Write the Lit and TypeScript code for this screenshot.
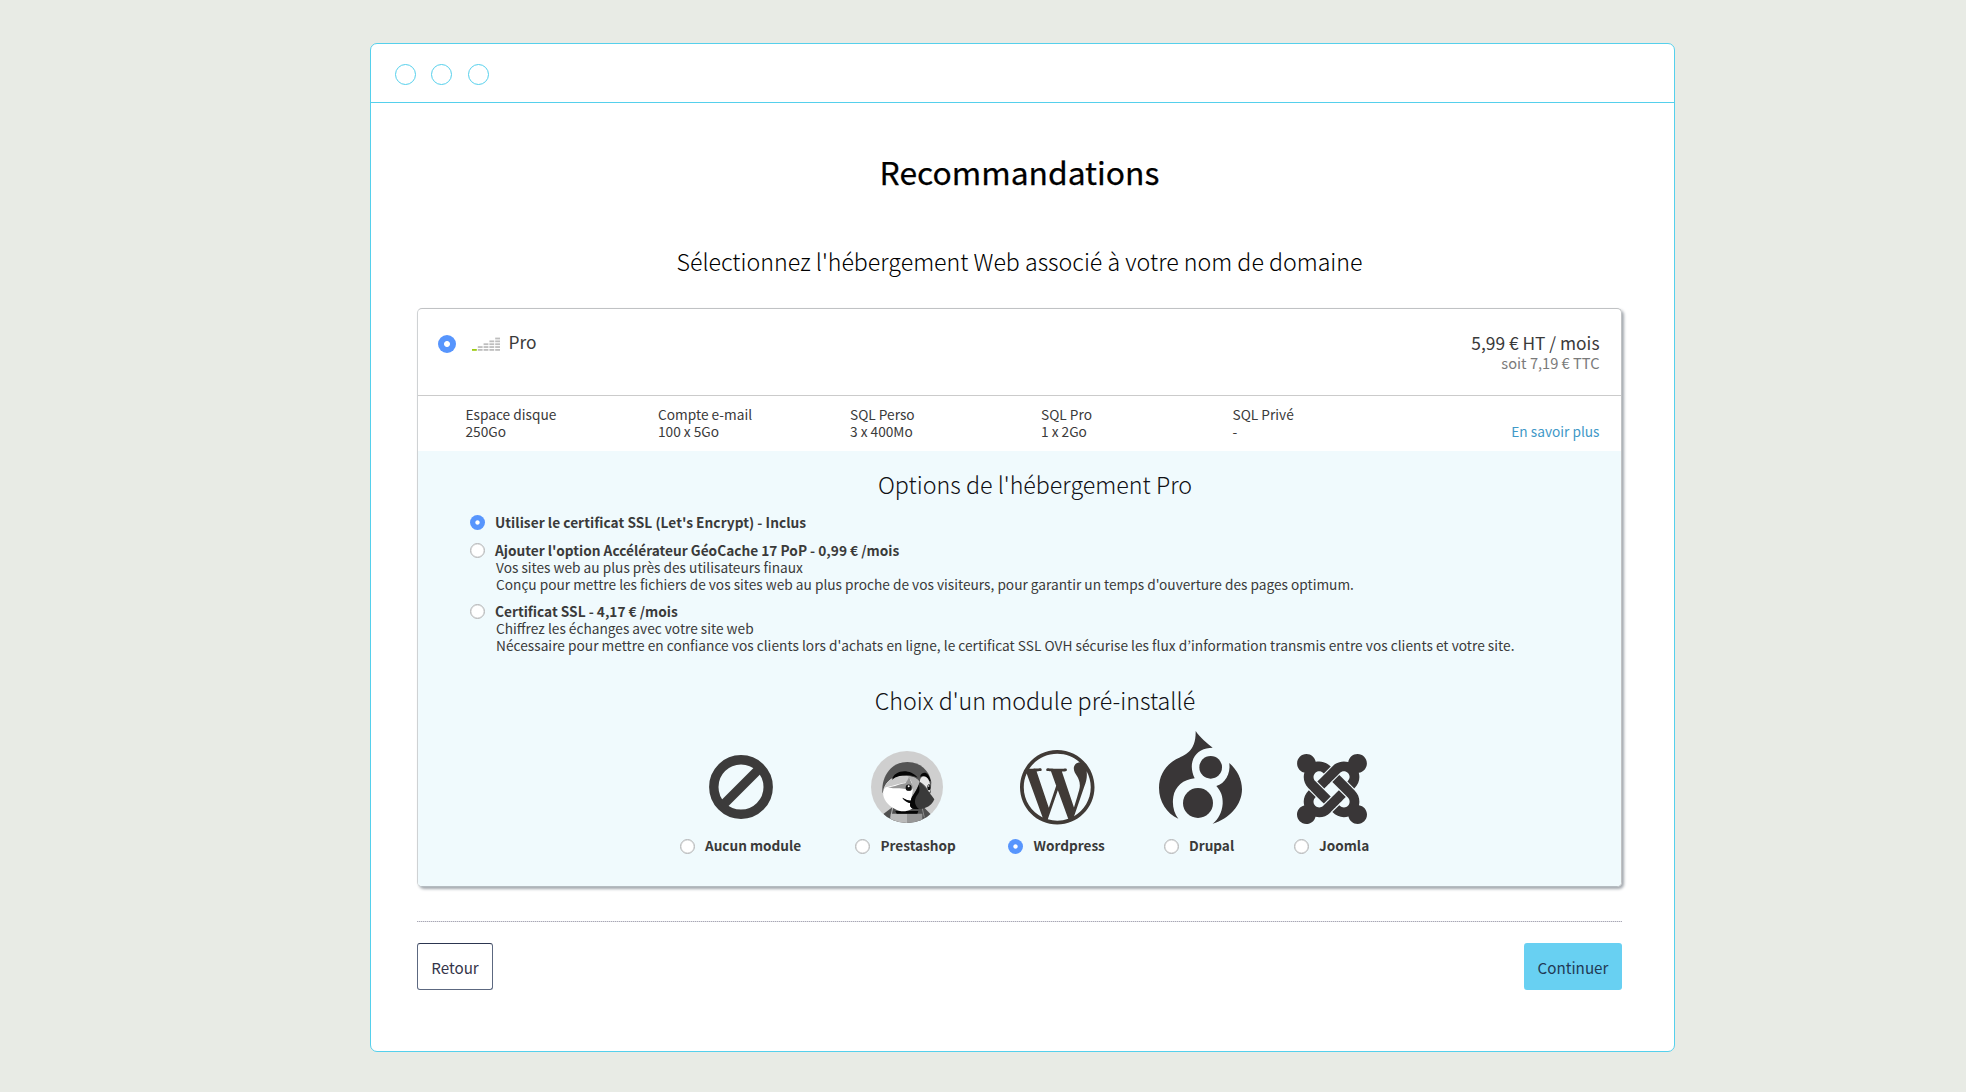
import { LitElement, html, svg, css, TemplateResult } from "lit";
import { customElement, property } from "lit/decorators.js";

@customElement("round-radio")
export class RoundRadio extends LitElement {
  @property({ type: Boolean, reflect: true }) checked = false;

  static styles = css`
    :host {
      display: block;
      box-sizing: border-box;
      flex: none;
      width: 15px;
      height: 15px;
      border-radius: 50%;
      background: #fff;
      border: 1px solid #b4b5b6;
      box-shadow: inset 0 0 0 0.5px #d5d7d8;
    }
    :host([checked]) {
      border: 0;
      box-shadow: none;
      background: radial-gradient(circle, #fff 0 1.7px, #5795fd 2.6px);
    }
    :host([large]) {
      width: 18px;
      height: 18px;
      background: radial-gradient(circle, #fff 0 2.5px, #5795fd 3.4px);
    }
  `;

  render() {
    return html``;
  }
}

interface Choice {
  label: string;
  lines: string[];
  checked?: boolean;
}

interface Module {
  label: string;
  cls: string;
  icon: TemplateResult;
  checked?: boolean;
}

const noneIcon = html`<svg class="icon none" viewBox="0 0 64 64">
  <circle cx="32" cy="32" r="27.2" fill="none" stroke="#3c3b3b" stroke-width="9.4" />
  <path d="M13 51L51 13" stroke="#3c3b3b" stroke-width="9.2" />
</svg>`;

const prestashopIcon = html`<svg class="icon prestashop" viewBox="33 19 216 216">
  <defs><clipPath id="disc"><circle cx="141" cy="127" r="108" /></clipPath></defs>
  <circle cx="141" cy="127" r="108" fill="#cfcfcf" />
  <g clip-path="url(#disc)">
    <path d="M67 143C64 92 96 52 142 52C181 52 208 78 214 112L212 145L160 192L104 190Z" fill="#545454" />
    <path d="M70 208L99 186L190 186L215 212L192 240H90Z" fill="#4f4f4f" />
    <path d="M92 207H141V240H92Z" fill="#b9b9b9" />
    <path d="M141 207H187V240H141Z" fill="#979797" />
    <path d="M106 199H175L172 207H110Z" fill="#050505" />
    <path d="M98 188L92 222" stroke="#bdbdbd" stroke-width="3" />
    <path d="M186 188L193 218" stroke="#8d8d8d" stroke-width="3" />
    <path d="M69 142C74 108 102 91 132 94C158 93 179 105 183 120L168 178C157 202 124 205 105 193C82 181 69 164 69 142Z" fill="#fff" />
    <path d="M70 135C80 106 102 93 133 94L146 95L142 113C119 117 102 123 77 128Z" fill="#c9c9c9" />
    <path d="M143 95C164 94 177 105 181 119L165 154L153 174C151 158 161 145 158 124C156 113 151 104 143 95Z" fill="#b4b4b4" />
    <path d="M84 128C105 127 120 117 136 116C142 109 145 101 147 95C150 105 153 113 158 121C163 137 147 146 137 133C121 130 105 134 84 128Z" fill="#969696" />
    <path d="M96 105C103 76 149 70 173 99C147 87 118 89 96 105Z" fill="#050505" />
    <path d="M180 96C184 82 205 75 212 110L207 108C201 94 193 91 180 96Z" fill="#050505" />
    <path d="M180 112C178 93 199 89 207 108C213 124 214 139 207 143C203 132 195 120 180 112Z" fill="#e7e7e7" />
    <ellipse cx="146" cy="129" rx="9" ry="9.5" fill="#111" />
    <circle cx="146" cy="125" r="3" fill="#fff" />
    <ellipse cx="207" cy="128" rx="5" ry="9" fill="#111" />
    <circle cx="206" cy="124" r="2" fill="#fff" />
    <path d="M179 111C190 122 215 151 223 164C216 184 190 198 164 193C151 192 148 181 151 176C142 173 132 168 127 159C137 164 145 168 152 168C156 152 169 141 179 111Z" fill="#3a3a3a" />
    <path d="M176 121C169 143 156 151 152 168C145 168 137 164 127 159C132 168 142 173 151 176C148 182 151 192 164 193H177C161 181 162 162 174 148C180 141 179 128 176 121Z" fill="#080808" />
  </g>
</svg>`;

const wordpressIcon = html`<svg class="icon wordpress" viewBox="0 0 24 24">
  <path fill="#403a36" fill-rule="evenodd" d="M21.469 6.825c.84 1.537 1.318 3.3 1.318 5.175 0 3.979-2.156 7.456-5.363 9.325l3.295-9.527c.615-1.54.82-2.771.82-3.864 0-.405-.026-.78-.07-1.11m-7.981.105c.647-.03 1.232-.105 1.232-.105.582-.075.514-.93-.067-.899 0 0-1.755.135-2.88.135-1.064 0-2.85-.15-2.85-.15-.585-.03-.661.855-.075.885 0 0 .54.061 1.125.09l1.68 4.605-2.37 7.08L5.354 6.9c.649-.03 1.234-.1 1.234-.1.585-.075.516-.93-.065-.896 0 0-1.746.138-2.874.138-.2 0-.438-.008-.69-.015C4.911 3.15 8.235 1.215 12 1.215c2.809 0 5.365 1.072 7.286 2.833-.046-.003-.091-.009-.141-.009-1.06 0-1.812.923-1.812 1.914 0 .89.513 1.643 1.06 2.531.411.72.89 1.643.89 2.977 0 .915-.354 1.994-.821 3.479l-1.075 3.585-3.9-11.61.001.014zM12 22.784c-1.059 0-2.081-.153-3.048-.437l3.237-9.406 3.315 9.087c.024.053.05.101.078.149-1.12.393-2.325.609-3.582.609M1.211 12c0-1.564.336-3.05.935-4.39L7.29 21.709C3.694 19.96 1.212 16.271 1.211 12M12 0C5.385 0 0 5.385 0 12s5.385 12 12 12 12-5.385 12-12S18.615 0 12 0" />
</svg>`;

const drupalIcon = html`<svg class="icon drupal" viewBox="477 155 249 279">
  <g fill="#393637">
    <path d="M587 155C600 175 622 192 638 205C612 205 590 216 580 238C572 257 575 279 584 297C550 300 525 322 520 352C516 376 521 400 535 418C500 402 477 367 477 325C477 290 495 258 528 240C555 225 588 218 587 155Z" />
    <circle cx="632" cy="264" r="34" />
    <circle cx="594" cy="371" r="45" />
    <path d="M688 251C712 272 726 300 726 330C726 376 688 420 638 433C655 419 666 400 668 373C669 352 663 335 649 320C675 312 692 285 688 251Z" />
  </g>
</svg>`;

const joomlaIcon = html`<svg class="icon joomla" viewBox="0 32 448 448">
  <path fill="#393637" d="M.6 92.1C.6 58.8 27.4 32 60.4 32c30 0 54.5 21.9 59.2 50.2 32.6-7.6 67.1.6 96.5 30l-44.3 44.3c-20.5-20.5-42.6-16.3-55.4-3.5-14.3 14.3-14.3 37.9 0 52.2l99.5 99.5-44 44.3c-87.7-87.2-49.7-49.7-99.8-99.7-26.8-26.5-35-64.8-24.8-98.9C20.4 144.6.6 120.7.6 92.1zm129.5 116.4l44.3 44.3c10-10 89.7-89.7 99.7-99.8 14.3-14.3 37.6-14.3 51.9 0 12.8 12.8 17 35-3.5 55.4l44 44.3c31.2-31.2 38.5-67.6 28.9-101.2 29.2-4.1 51.9-29.2 51.9-59.5 0-33.2-26.8-60.1-59.8-60.1-30.3 0-55.4 22.5-59.5 51.6-33.8-9.9-71.7-1.5-98.3 25.1-18.3 19.1-71.1 71.5-99.6 99.9zm266.3 152.2c8.2-32.7-.9-68.5-26.3-93.9-11.8-12.2 5 4.7-99.5-99.7l-44.3 44.3 99.7 99.7c14.3 14.3 14.3 37.6 0 51.9-12.8 12.8-35 17-55.4-3.5l-44 44.3c27.6 30.2 68 38.8 102.7 28 5.5 27.4 29.7 48.1 58.9 48.1 33 0 59.8-26.8 59.8-60.1 0-30.2-22.5-55-51.6-59.1zm-84.3-53.1l-44-44.3c-87 86.4-50.4 50.4-99.7 99.8-14.3 14.3-37.6 14.3-51.9 0-13.1-13.4-16.9-35.3 3.2-55.4l-44-44.3c-30.2 30.2-38 65.2-29.5 98.3-26.7 6-46.2 29.9-46.2 58.2C0 453.2 26.8 480 59.8 480c28.6 0 52.5-19.8 58.6-46.7 32.7 8.2 68.5-.6 94.2-26 32.1-32 12.2-12.4 99.5-99.7z" />
</svg>`;

/** Level meter: five columns of growing height, the first one lit. */
const levels = html`<svg class="levels" viewBox="0 0 28 14">
  ${[1, 2, 3, 4, 5].map((count, col) =>
    Array.from(
      { length: count },
      (_, i) => svg`<rect x=${col * 5.8} y=${12 - i * 2.85} width="4.8" height="1.8" fill=${col === 0 ? "#9ccb12" : "#bebebe"} />`
    )
  )}
</svg>`;

const specs: [string, string][] = [
  ["Espace disque", "250Go"],
  ["Compte e-mail", "100 x 5Go"],
  ["SQL Perso", "3 x 400Mo"],
  ["SQL Pro", "1 x 2Go"],
  ["SQL Privé", "-"],
];

const choices: Choice[] = [
  { label: "Utiliser le certificat SSL (Let's Encrypt) - Inclus", lines: [], checked: true },
  {
    label: "Ajouter l'option Accélérateur GéoCache 17 PoP - 0,99 € /mois",
    lines: [
      "Vos sites web au plus près des utilisateurs finaux",
      "Conçu pour mettre les fichiers de vos sites web au plus proche de vos visiteurs, pour garantir un temps d'ouverture des pages optimum.",
    ],
  },
  {
    label: "Certificat SSL - 4,17 € /mois",
    lines: [
      "Chiffrez les échanges avec votre site web",
      "Nécessaire pour mettre en confiance vos clients lors d'achats en ligne, le certificat SSL OVH sécurise les flux d’information transmis entre vos clients et votre site.",
    ],
  },
];

const modules: Module[] = [
  { label: "Aucun module", cls: "m-none", icon: noneIcon },
  { label: "Prestashop", cls: "m-presta", icon: prestashopIcon },
  { label: "Wordpress", cls: "m-wp", icon: wordpressIcon, checked: true },
  { label: "Drupal", cls: "m-drupal", icon: drupalIcon },
  { label: "Joomla", cls: "m-joomla", icon: joomlaIcon },
];

@customElement("app-root")
export class AppRoot extends LitElement {
  static styles = css`
    * {
      box-sizing: border-box;
    }
    :host {
      display: block;
      height: 1092px;
      overflow: hidden;
      padding: 43px 0 0 370px;
      background: #e8ebe5;
      color: #3a3a3a;
      font-family: "Noto Sans CJK KR", "Open Sans", sans-serif;
      font-size: 13.69px;
      line-height: 17px;
      white-space: nowrap;
      box-sizing: border-box;
    }
    h1, h2, p {
      margin: 0;
    }
    .window {
      width: 1305px;
      height: 1009px;
      background: #fff;
      border: 1px solid #55d0ec;
      border-radius: 7px;
    }
    .titlebar {
      display: flex;
      height: 59px;
      padding: 20px 0 0 24px;
      gap: 15px;
      border-bottom: 1px solid #55d0ec;
    }
    .dot {
      width: 21px;
      height: 21px;
      border: 1px solid #55d0ec;
      border-radius: 50%;
    }
    .dot:last-child {
      margin-left: 1px;
    }
    .content {
      width: 1205px;
      margin-left: 46px;
      padding-top: 48px;
    }
    h1 {
      color: #000;
      font-size: 31.8px;
      font-weight: 400;
      line-height: 40px;
      text-align: center;
      -webkit-text-stroke: 0.25px #000;
    }
    h2 {
      color: #101014;
      font-size: 23.25px;
      font-weight: 300;
      line-height: 30px;
      text-align: center;
    }
    .lead {
      margin-top: 54.5px;
      color: #000;
      font-size: 23.18px;
    }
    .panel {
      height: 579px;
      margin-top: 32px;
      border: 1px solid #c0c2c4;
      border-left-color: #cfd2d4;
      border-bottom-color: #b4bbc0;
      border-radius: 5px;
      box-shadow: 2px 2px 3px #a3a8ae;
      overflow: hidden;
    }
    .plan {
      display: flex;
      height: 87px;
      padding: 22px 21.5px 0 20px;
      border-bottom: 1px solid #cbcbcb;
      font-size: 17.35px;
      line-height: 22px;
    }
    .plan round-radio {
      margin-top: 4px;
    }
    .levels {
      width: 28px;
      height: 14px;
      margin: 6.5px 8.5px 0 16px;
      flex: none;
    }
    .price {
      margin: 1px 0 0 auto;
      text-align: right;
    }
    .price p + p {
      color: #7a7a7a;
      font-size: 14.65px;
      line-height: 18px;
    }
    .specs {
      display: grid;
      grid-template-columns: 192.5px 192px 191px 191.5px 1fr auto;
      height: 55px;
      padding: 10px 21.5px 0 47.5px;
    }
    .more {
      padding-top: 17px;
      color: #3f99c8;
    }
    .options {
      height: 436px;
      padding: 18px 0 0 31px;
      background: #f0fafd;
    }
    .choices {
      margin: 14px 0 31.5px 21px;
      display: grid;
    }
    .choice {
      display: grid;
      grid-template-columns: 15px auto;
      column-gap: 10px;
      margin-bottom: 9px;
    }
    .choice:first-child {
      margin-bottom: 10px;
      letter-spacing: 0.04px;
    }
    .choice:last-child {
      margin-bottom: 0;
    }
    .choice:last-child p:last-child {
      letter-spacing: 0.02px;
    }
    .choice round-radio {
      margin-top: 2.5px;
    }
    .choice strong {
      line-height: 18px;
      font-weight: 700;
      display: block;
    }
    .choice p {
      padding-left: 1px;
    }
    .modules {
      display: grid;
      grid-template-columns: 175.5px 153px 155.5px 130px 90px;
      height: 121px;
      margin: 14.5px 0 0 230.5px;
    }
    .module {
      display: grid;
      grid-template-rows: 106px 18px;
      justify-items: start;
    }
    .pick {
      display: flex;
      gap: 10.5px;
      line-height: 18px;
      font-weight: 700;
      font-size: 13.6px;
    }
    .pick round-radio {
      margin-top: 3px;
    }
    .icon {
      display: block;
      overflow: visible;
    }
    .none { width: 64px; height: 64px; margin: 25px 0 0 29px; }
    .prestashop { width: 72px; height: 72px; margin: 21px 0 0 16px; }
    .wordpress { width: 74.5px; height: 74.5px; margin: 20px 0 0 11.5px; }
    .drupal { width: 83px; height: 93px; margin: 1.5px 0 0 -4.5px; }
    .joomla { width: 70px; height: 70px; margin: 24.5px 0 0 3px; }
    .separator {
      height: 1px;
      margin-top: 34px;
      background: repeating-linear-gradient(90deg, #a9a8b5 0 1px, #dcdce2 1px 2px);
    }
    .actions {
      display: flex;
      justify-content: space-between;
      margin-top: 21px;
    }
    button {
      height: 47.5px;
      padding: 2px 0 0;
      border-radius: 3px;
      font: inherit;
      font-size: 15.2px;
    }
    .back {
      width: 76px;
      border: 1px solid #5c6880;
      border-top-color: #2c3650;
      background: #fff;
      color: #35354a;
    }
    .next {
      width: 98px;
      border: 0;
      background: #68d0f2;
      color: #223a55;
    }
  `;

  render() {
    return html`
      <main class="window">
        <header class="titlebar"><i class="dot"></i><i class="dot"></i><i class="dot"></i></header>
        <div class="content">
          <h1>Recommandations</h1>
          <h2 class="lead">Sélectionnez l'hébergement Web associé à votre nom de domaine</h2>
          <section class="panel">
            <div class="plan">
              <round-radio large checked></round-radio>
              ${levels}
              <span>Pro</span>
              <div class="price">
                <p>5,99 € HT / mois</p>
                <p>soit 7,19 € TTC</p>
              </div>
            </div>
            <div class="specs">
              ${specs.map(([name, value]) => html`<div><p>${name}</p><p>${value}</p></div>`)}
              <a class="more">En savoir plus</a>
            </div>
            <div class="options">
              <h2>Options de l'hébergement Pro</h2>
              <div class="choices">
                ${choices.map(
                  (c) => html`<div class="choice">
                    <round-radio ?checked=${!!c.checked}></round-radio>
                    <div><strong>${c.label}</strong>${c.lines.map((l) => html`<p>${l}</p>`)}</div>
                  </div>`
                )}
              </div>
              <h2>Choix d'un module pré-installé</h2>
              <div class="modules">
                ${modules.map(
                  (m) => html`<div class="module ${m.cls}">
                    ${m.icon}
                    <div class="pick"><round-radio ?checked=${!!m.checked}></round-radio><span>${m.label}</span></div>
                  </div>`
                )}
              </div>
            </div>
          </section>
          <div class="separator"></div>
          <footer class="actions">
            <button class="back">Retour</button>
            <button class="next">Continuer</button>
          </footer>
        </div>
      </main>
    `;
  }
}
